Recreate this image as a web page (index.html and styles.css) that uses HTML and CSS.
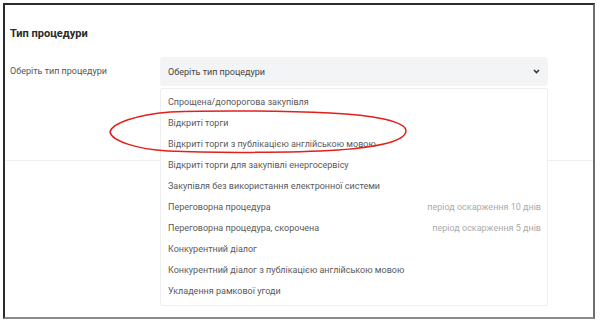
FILE: index.html
```html
<!DOCTYPE html>
<html lang="uk">
<head>
    <meta charset="UTF-8">
    <meta name="viewport" content="width=device-width, initial-scale=1.0">
    <title>Тип процедури</title>
    <link rel="stylesheet" href="styles.css">
</head>
<body>
    <div class="frame">
        <div class="section">
            <h2 class="section-title">Тип процедури</h2>

            <div class="form-row">
                <label class="form-label" for="procType">Оберіть тип процедури</label>
                <div class="select-wrap">
                    <div class="select" id="procType">
                        <span>Оберіть тип процедури</span>
                        <svg class="chevron" width="7" height="5" viewBox="0 0 7 5">
                            <polyline points="1,1 3.5,3.6 6,1" fill="none" stroke="#333" stroke-width="1.5"/>
                        </svg>
                    </div>

                    <ul class="menu">
                        <li>Спрощена/допорогова закупівля</li>
                        <li>Відкриті торги</li>
                        <li>Відкриті торги з публікацією англійською мовою</li>
                        <li>Відкриті торги для закупівлі енергосервісу</li>
                        <li>Закупівля без використання електронної системи</li>
                        <li>Переговорна процедура <span class="note">період оскарження 10 днів</span></li>
                        <li>Переговорна процедура, скорочена <span class="note">період оскарження 5 днів</span></li>
                        <li>Конкурентний діалог</li>
                        <li>Конкурентний діалог з публікацією англійською мовою</li>
                        <li>Укладення рамкової угоди</li>
                    </ul>
                </div>
            </div>
        </div>

        <!-- hand drawn marker round the two options -->
        <svg class="marker" width="600" height="325" viewBox="0 0 600 325">
            <path d="M110,132 C112,123 136,115 170,112 C220,110 290,111 330,113 C372,115 406,121 406,131 C405,142 376,147 338,150 C290,153 210,153 168,151 C136,149 112,141 110,132 Z"
                  fill="none" stroke="#e2201c" stroke-width="1.5"/>
        </svg>
    </div>
</body>
</html>
```

FILE: styles.css
```css
html, body {
    margin: 0;
    padding: 0;
    background: #fff;
}
body {
    font-family: Roboto, "Liberation Sans", Arial, sans-serif;
    width: 600px;
    height: 325px;
    overflow: hidden;
}
.frame {
    margin: 3px 5px 0 3px;
    height: 312px;
    border-left: 2px solid #2b2b2b;
    border-top: 2px solid #2b2b2b;
    border-right: 2px solid #6e6e6e;
    border-bottom: 2px solid #8a8a8a;
}
.section {
    padding: 22px 0 0 5px;
    height: 133px;
    border-bottom: 1px solid #efefef;
}
.section-title {
    margin: 0;
    font-size: 11px;
    font-weight: bold;
    color: #2a2a2a;
    line-height: 14px;
}
.form-row {
    display: flex;
    margin-top: 16px;
}
.form-label {
    width: 150px;
    font-size: 9px;
    color: #555;
    line-height: 29px;
}
.select-wrap {
    position: relative;
    width: 388px;
}
.select {
    display: flex;
    align-items: center;
    justify-content: space-between;
    height: 29px;
    padding: 0 8px;
    background: #f3f4f5;
    border-radius: 3px;
    font-size: 9px;
    color: #444;
    box-sizing: border-box;
}
.menu {
    position: absolute;
    top: 31px;
    left: 0;
    width: 388px;
    box-sizing: border-box;
    margin: 0;
    padding: 3px 0;
    list-style: none;
    background: #fff;
    border: 1px solid #eeeeee;
    border-radius: 2px;
}
.menu li {
    display: flex;
    justify-content: space-between;
    height: 21px;
    line-height: 21px;
    padding: 0 6px 0 7px;
    font-size: 9px;
    color: #5a5a5a;
}
.menu .note {
    color: #ababab;
}
.marker {
    position: absolute;
    top: 0;
    left: 0;
    pointer-events: none;
}
```
